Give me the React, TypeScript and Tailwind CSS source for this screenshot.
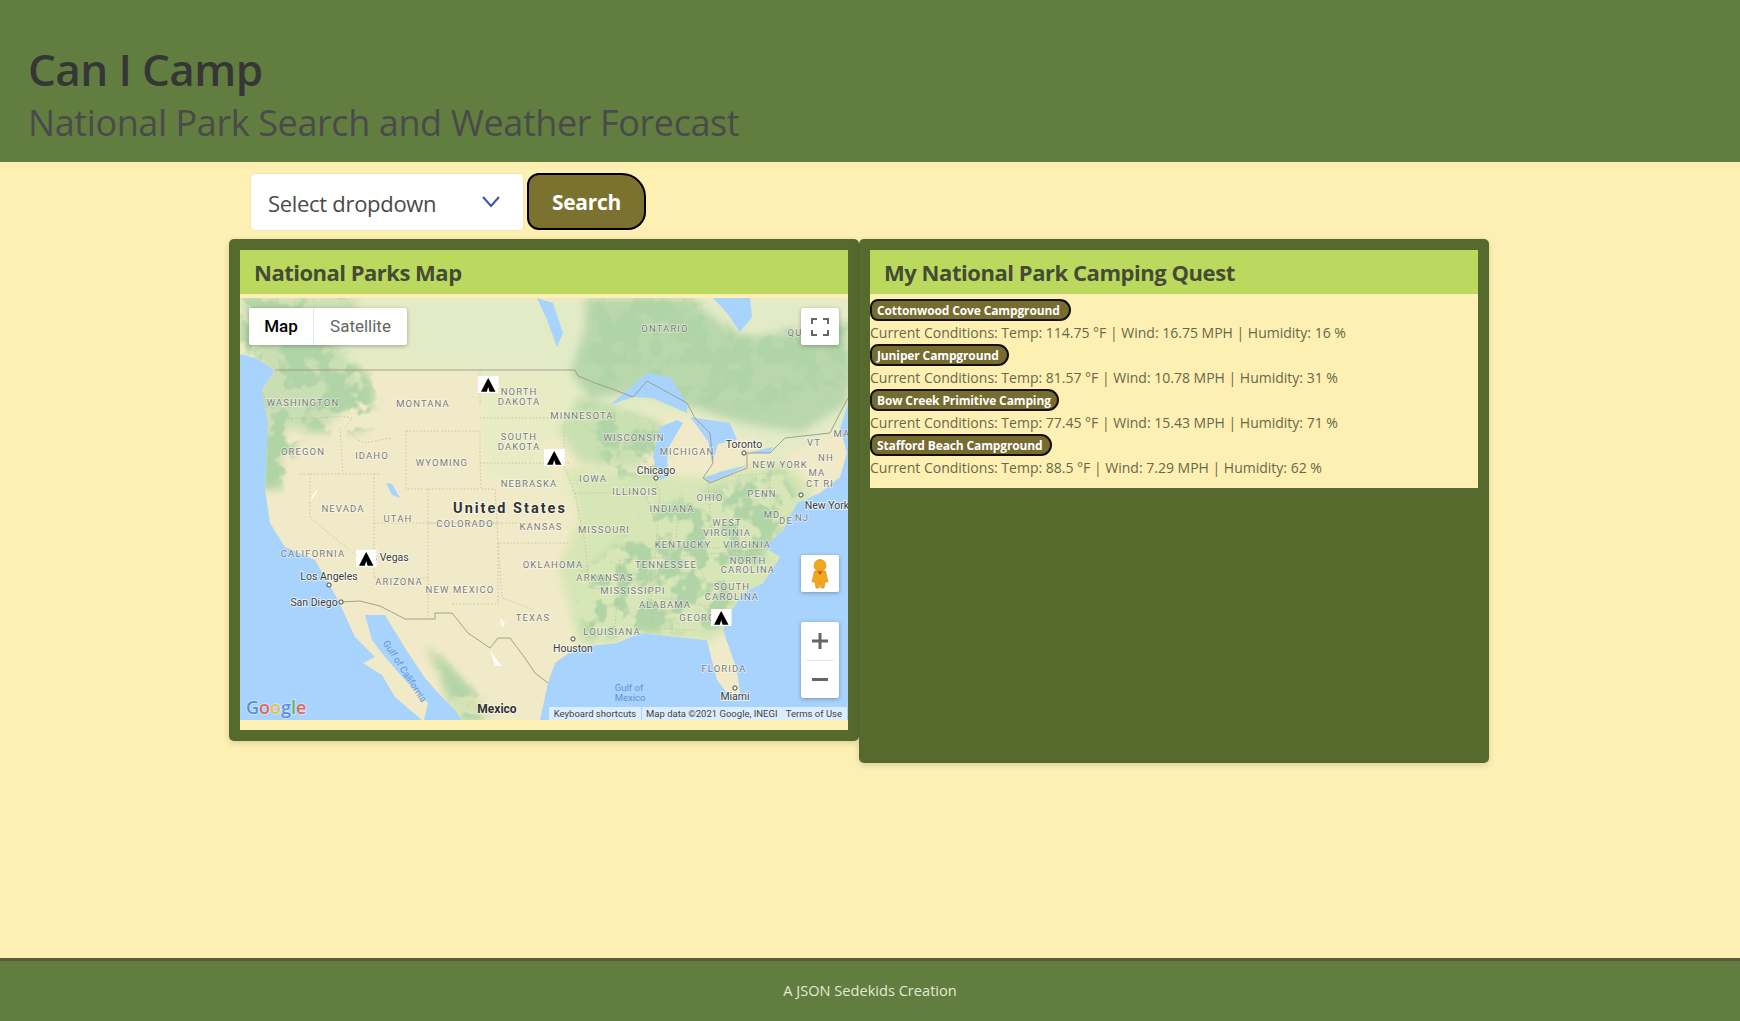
import React from "react";

type L = [string, number, number];
const states: L[] = [
  ["WASHINGTON", 63, 104], ["MONTANA", 183, 105], ["NORTH", 279, 93], ["DAKOTA", 279, 103], ["OREGON", 63, 153], ["IDAHO", 132, 157],
  ["WYOMING", 202, 164], ["SOUTH", 279, 138], ["DAKOTA", 279, 148], ["NEBRASKA", 289, 185], ["NEVADA", 103, 210], ["UTAH", 158, 220],
  ["COLORADO", 225, 225], ["KANSAS", 301, 228], ["MINNESOTA", 342, 117], ["WISCONSIN", 394, 139], ["MICHIGAN", 447, 153], ["IOWA", 353, 180],
  ["ILLINOIS", 395, 193], ["INDIANA", 432, 210], ["OHIO", 470, 199], ["PENN", 522, 195], ["NEW YORK", 540, 166], ["ONTARIO", 425, 30],
  ["QU", 555, 34], ["VT", 574, 144], ["NH", 586, 159], ["MA", 577, 174], ["CT RI", 580, 185], ["MD", 532, 216], ["DE", 546, 222], ["NJ", 562, 219],
  ["MA", 602, 135], ["WEST", 487, 224], ["VIRGINIA", 487, 234], ["KENTUCKY", 443, 246], ["VIRGINIA", 507, 246], ["MISSOURI", 364, 231],
  ["CALIFORNIA", 73, 255], ["ARIZONA", 159, 283], ["NEW MEXICO", 220, 291], ["TEXAS", 293, 319], ["OKLAHOMA", 313, 266], ["ARKANSAS", 365, 279],
  ["TENNESSEE", 426, 266], ["MISSISSIPPI", 393, 292], ["ALABAMA", 425, 306], ["NORTH", 508, 262], ["CAROLINA", 508, 271], ["SOUTH", 492, 288],
  ["CAROLINA", 492, 298], ["GEORGIA", 463, 319], ["LOUISIANA", 372, 333], ["FLORIDA", 484, 370],
];
const cities: L[] = [
  ["Toronto", 504, 146], ["Chicago", 416, 172], ["New York", 587, 207], ["Las Vegas", 144.5, 259], ["Los Angeles", 89, 278], ["San Diego", 74, 304],
  ["Houston", 333, 350], ["Miami", 495, 398],
];
const dots: [number, number][] = [[504, 155], [416, 180], [561, 197], [89, 287], [101, 304], [333, 341], [495, 390]];
const tents: [number, number][] = [[238, 78], [304, 151], [116, 252], [471, 311]];

const stateLines = [
  "M48 120 L70 121 L100 118 L112 120 L105 130 L118 142 L125 145 L150 140", "M100 130 L103 176 L141 176", "M166 133 L166 191 L255 191",
  "M166 133 L240 133 L240 165 L241 191", "M240 107 L240 72", "M240 120 L335 120", "M240 165 L330 165", "M60 176 L100 176 M70 176 L70 220 L122 262",
  "M134 176 L134 280 M134 225 L258 225 M188 191 L188 320 M134 280 L188 280", "M188 225 L290 225", "M255 191 L258 245 L330 245", "M258 245 L258 306 L212 306",
  "M258 245 L262 300 L295 312", "M325 120 L323 165 L335 195 L405 195 L415 225", "M335 195 L345 245 L350 290 L372 292", "M405 160 L420 195 L415 260 L380 262",
  "M380 262 L375 330 M410 262 L412 330 L455 332", "M440 200 L435 250 L480 250", "M468 178 L470 215 M470 180 L530 175 L530 205", "M415 260 L520 252",
  "M480 310 L420 300", "M455 262 L470 290",
];

const landPath =
  "M0 0 L608 0 L608 105 L600 130 L607 155 L600 179 L580 195 L557 205 L543 232 L524 249 L540 259 L523 285 L503 295 L487 319 L483 332 L497 372 L500 395 L490 399 L477 382 L470 355 L467 342 L437 339 L400 335 L377 345 L337 349 L315 365 L308 385 L300 422 L222 422 L182 422 L155 399 L142 377 L123 365 L135 359 L115 339 L98 302 L75 262 L45 249 L30 225 L25 192 L28 125 L22 92 L35 72 L15 60 L0 56 Z";

function Tent({ x, y }: { x: number; y: number }) {
  return (
    <g transform={`translate(${x} ${y})`}>
      <rect width="20.5" height="17" fill="#fff" />
      <path d="M10.2 2 L12 5.2 L17.5 15.8 L11.6 15.8 L10.2 11 L8.8 15.8 L3 15.8 L8.4 5.2 Z" fill="#000" />
    </g>
  );
}

function MapArt() {
  return (
    <svg viewBox="0 0 608 422" className="block w-full h-full" style={{ fontFamily: "Roboto, sans-serif" }}>
      <defs>
        <filter id="b3" x="-10%" y="-10%" width="120%" height="120%"><feGaussianBlur stdDeviation="4" /></filter>
        <filter id="b1"><feGaussianBlur stdDeviation="0.5" /></filter>
        <filter id="forest" x="0" y="0" width="100%" height="100%" colorInterpolationFilters="sRGB">
          <feGaussianBlur in="SourceGraphic" stdDeviation="5" result="soft" />
          <feTurbulence type="fractalNoise" baseFrequency="0.045" numOctaves="3" seed="7" result="t" />
          <feColorMatrix in="t" type="matrix" values="0 0 0 0 0.69  0 0 0 0 0.83  0 0 0 0 0.65  0 0 0 9 -4.1" result="n" />
          <feComposite in="n" in2="soft" operator="in" />
          <feGaussianBlur stdDeviation="0.6" />
        </filter>
        <clipPath id="land"><path d={landPath} /></clipPath>
      </defs>
      <rect width="608" height="422" fill="#a8d3fc" />
      <path d={landPath} fill="#f1eac8" />
      <g clipPath="url(#land)">
        <g filter="url(#b3)">
          <path d="M0 0 L608 0 L608 130 L540 160 L460 120 L330 110 L300 72 L120 72 L0 60 Z" fill="#e3ebc6" />
          <path d="M345 0 L450 0 L500 40 L608 25 L608 105 L560 135 L500 125 L455 110 L400 95 L350 100 L330 75 L345 30 Z" fill="#b8d7ab" />
          <path d="M300 105 L350 100 L420 125 L400 170 L340 165 Z" fill="#c9e0b0" />
          <path d="M325 170 L470 180 L540 160 L575 190 L530 285 L490 330 L470 345 L400 340 L340 350 L318 270 L340 220 Z" fill="#d7e6b6" />
          <path d="M0 0 L120 0 L100 50 L125 90 L80 135 L45 130 L40 190 L20 190 L20 60 Z" fill="#c9deb2" />
          <path d="M185 345 L215 370 L255 422 L215 422 Z" fill="#d5e2b4" />
          <path d="M240 72 L330 75 L335 105 L300 160 L330 200 L245 180 Z" fill="#e8ecc5" />
        </g>
        <g filter="url(#forest)" fill="#000">
          <path d="M0 0 H115 L100 50 L135 85 L135 130 L100 135 L60 130 L42 190 L20 190 L20 60 L0 50 Z M340 105 L425 130 L425 175 L370 180 Z M420 210 L540 170 L560 205 L500 290 L480 330 L400 335 L345 340 L340 280 Z M450 0 L500 40 L608 25 L608 90 L520 110 L455 105 L400 80 L350 90 L345 40 L360 0 Z M190 350 L240 400 L250 422 L220 422 Z" />
        </g>
      </g>
      <g fill="#a8d3fc" filter="url(#b1)">
        <path d="M370 107 L407 75 L430 79 L447 105 L447 115 L413 100 L393 99 Z" />
        <path d="M437 122 L420 129 L413 159 L420 182 L428 179 L427 152 L443 125 Z" />
        <path d="M450 119 L490 125 L497 142 L478 146 L472 165 L468 143 Z" />
        <path d="M463 180 L480 174 L507 167 L493 175 L470 185 Z" />
        <path d="M507 155 L533 149 L530 155 Z" />
        <path d="M297 0 L313 5 L323 35 L317 49 L307 22 Z" />
        <path d="M473 0 L510 0 L512 19 L500 34 L487 15 Z" />
        <path d="M125 317 L145 317 L165 350 L185 380 L200 397 L215 412 L222 422 L184 422 L188 405 L165 382 L145 359 L132 342 Z" />
        <path d="M146 185 L152 186 L160 200 L152 197 Z" />
      </g>
      <g fill="#fff" opacity="0.85">
        <path d="M72 198 L78 190 L76 196 L70 204 Z" />
        <path d="M260 320 L265 325 L262 330 Z" />
        <path d="M250 352 L257 362 L262 368 L255 368 Z" />
      </g>
      <g fill="none" stroke="#c4bb98" strokeWidth="0.8" strokeDasharray="1.5 2">
        {stateLines.map((d, i) => <path key={i} d={d} />)}
      </g>
      <g fill="none" stroke="#9a9a84" strokeWidth="0.9">
        <path d="M35 72 L335 72 L338 78 L355 85 L375 92 L393 99 L407 83 L447 105 L455 120 L470 135 L473 165 L463 180 L470 185 L507 170 L507 155 L530 155 L545 140 L590 135 L600 115 L608 100" />
        <path d="M101 304 L120 303 L140 308 L165 321 L195 321 L195 315 L212 315 L228 335 L250 350 L258 340 L270 340 L285 360 L295 375 L308 385" />
      </g>
      <g fontSize="9.5" fill="#7b7b78" textAnchor="middle" letterSpacing="1.1" stroke="#ffffff" strokeOpacity="0.55" strokeWidth="1.6" style={{ paintOrder: "stroke" }}>
        {states.map(([t, x, y], i) => <text key={i} x={x} y={y + 3.5}>{t}</text>)}
      </g>
      <g fontSize="10.5" fill="#3d3d3d" textAnchor="middle" stroke="#ffffff" strokeOpacity="0.7" strokeWidth="1.8" style={{ paintOrder: "stroke" }}>
        {cities.map(([t, x, y], i) => <text key={i} x={x} y={y + 3.5}>{t}</text>)}
      </g>
      <g fill="#fff" stroke="#444" strokeWidth="1">
        {dots.map(([x, y], i) => <circle key={i} cx={x} cy={y} r="2.1" />)}
      </g>
      <text x="270" y="215" textAnchor="middle" fontSize="14.5" fontWeight="700" letterSpacing="2" fill="#333" stroke="#fff" strokeOpacity="0.6" strokeWidth="2" style={{ paintOrder: "stroke" }}>United States</text>
      <text x="257" y="415" textAnchor="middle" fontSize="12" fontWeight="700" fill="#333" stroke="#fff" strokeOpacity="0.5" strokeWidth="1.6" style={{ paintOrder: "stroke" }}>Mexico</text>
      <g fontSize="9.5" fill="#5f93d3" textAnchor="middle">
        <text x="389" y="393">Gulf of</text>
        <text x="390" y="403">Mexico</text>
        <text transform="translate(162 375) rotate(57)" x="0" y="0">Gulf of California</text>
      </g>
      {tents.map(([x, y], i) => <Tent key={i} x={x} y={y} />)}
      <text x="6" y="416" fontSize="18" fontWeight="600" stroke="#fff" strokeOpacity="0.5" strokeWidth="1.5" style={{ paintOrder: "stroke", fontFamily: "'Open Sans', sans-serif" }}>
        <tspan fill="#5a8ddf">G</tspan><tspan fill="#e0665c">o</tspan><tspan fill="#e8bd4c">o</tspan><tspan fill="#5a8ddf">g</tspan><tspan fill="#5fb070">l</tspan><tspan fill="#e0665c">e</tspan>
      </text>
    </svg>
  );
}

function Ctrl({ className, children }: { className: string; children?: React.ReactNode }) {
  return <div className={`absolute bg-white rounded-[2px] shadow-[0_1px_4px_rgba(0,0,0,0.3)] ${className}`}>{children}</div>;
}

const quest = [
  { name: "Cottonwood Cove Campground", w: "w-[201px]", c: "Current Conditions: Temp: 114.75 °F | Wind: 16.75 MPH | Humidity: 16 %" },
  { name: "Juniper Campground", w: "w-[139px]", c: "Current Conditions: Temp: 81.57 °F | Wind: 10.78 MPH | Humidity: 31 %" },
  { name: "Bow Creek Primitive Camping", w: "w-[189px]", c: "Current Conditions: Temp: 77.45 °F | Wind: 15.43 MPH | Humidity: 71 %" },
  { name: "Stafford Beach Campground", w: "w-[182px]", c: "Current Conditions: Temp: 88.5 °F | Wind: 7.29 MPH | Humidity: 62 %" },
];

export default function App() {
  return (
    <div className="min-h-screen flex flex-col bg-[#fef0b3] font-['Open_Sans','Noto_Sans',sans-serif]">
      <header className="h-[162px] bg-[#627d40] pl-[28px] pt-[40px] flex flex-col">
        <h1 className="text-[44px] leading-[58px] font-semibold text-[#363636] tracking-[-0.6px]">Can I Camp</h1>
        <h2 className="pt-px text-[36px] leading-[47px] text-[#4a4a4a] tracking-[-0.4px]">National Park Search and Weather Forecast</h2>
      </header>

      <main className="flex-1 pl-[229px]">
        <div className="flex items-center pl-[22px] pt-[11px] h-[77px] pb-[9px]">
          <div className="w-[272px] h-[56px] bg-white rounded-[4px] shadow-[0_0_2px_rgba(0,0,0,0.12)] flex items-center justify-between pl-[17px] pr-[22px]">
            <span className="pt-[3px] text-[22px] text-[#4a4a4a] tracking-[-0.3px]">Select dropdown</span>
            <svg width="20" height="13" viewBox="0 0 20 13" fill="none" stroke="#3f51b5" strokeWidth="2"><path d="M2 2 L10 11 L18 2" /></svg>
          </div>
          <button className="ml-[4px] w-[119px] h-[57px] pt-[3px] bg-[#7c7230] border-2 border-black rounded-tl-[12px] rounded-bl-[12px] rounded-tr-[24px] rounded-br-[18px] text-white font-bold text-[21px] tracking-[-0.3px]">Search</button>
        </div>

        <div className="flex items-start">
          <section className="w-[630px] h-[502px] bg-[#566a2e] rounded-[5px] p-[11px] shadow-[0_2px_6px_rgba(0,0,0,0.15)]">
            <div className="h-[480px] bg-[#fef0b3] flex flex-col">
              <div className="h-[44px] bg-[#bcd95f] pl-[14px] flex items-center text-[22px] font-bold text-[#454b34] tracking-[-0.5px]">National Parks Map</div>
              <div className="relative mt-[4px] w-[608px] h-[422px] overflow-hidden">
                <MapArt />
                <div className="absolute left-[9px] top-[10px] h-[37px] flex bg-white rounded-[2px] shadow-[0_1px_4px_rgba(0,0,0,0.3)] font-['Roboto',sans-serif] text-[17px]">
                  <div className="w-[65px] flex items-center justify-center font-medium text-black border-r border-[#e6e6e6]">Map</div>
                  <div className="w-[93px] flex items-center justify-center text-[#666]">Satellite</div>
                </div>
                <Ctrl className="left-[561px] top-[10px] w-[38px] h-[37px] flex items-center justify-center">
                  <svg width="18" height="18" viewBox="0 0 18 18" fill="none" stroke="#666" strokeWidth="2"><path d="M1 6 V1 H6 M12 1 H17 V6 M17 12 V17 H12 M6 17 H1 V12" /></svg>
                </Ctrl>
                <Ctrl className="left-[561px] top-[257px] w-[38px] h-[37px] flex items-center justify-center">
                  <svg width="18" height="30" viewBox="0 0 18 30">
                    <circle cx="9" cy="6.5" r="6" fill="#f2a81d" stroke="#c98a14" strokeWidth="0.6" />
                    <path d="M3.5 12 H14.5 L17 23 L14 23 L13 29 H10 L9 23 L8 29 H5 L4 23 L1 23 Z" fill="#f2a81d" stroke="#c98a14" strokeWidth="0.6" />
                    <path d="M6.5 12.5 L9 16 L11.5 12.5" fill="#d8442f" />
                  </svg>
                </Ctrl>
                <Ctrl className="left-[561px] top-[324px] w-[38px] h-[76px] flex flex-col items-center">
                  <div className="h-[38px] flex items-center justify-center">
                    <svg width="18" height="18" viewBox="0 0 18 18" fill="#666"><path d="M7.5 1 H10.5 V7.5 H17 V10.5 H10.5 V17 H7.5 V10.5 H1 V7.5 H7.5 Z" /></svg>
                  </div>
                  <div className="w-[28px] h-px bg-[#e6e6e6]" />
                  <div className="h-[37px] flex items-center justify-center">
                    <svg width="18" height="4" viewBox="0 0 18 4" fill="#666"><rect x="1" width="16" height="3" /></svg>
                  </div>
                </Ctrl>
                <div className="absolute left-[309px] bottom-0 h-[13px] flex text-[#444] font-['Roboto',sans-serif] text-[9.5px] leading-[13px]">
                  <span className="w-[92px] bg-white/60 text-center">Keyboard shortcuts</span>
                  <span className="ml-px w-[205px] bg-white/60 flex justify-between pl-[4px] pr-[5px]">
                    <span>Map data ©2021 Google, INEGI</span><span>Terms of Use</span>
                  </span>
                </div>
              </div>
            </div>
          </section>

          <section className="w-[630px] h-[524px] bg-[#566a2e] rounded-[5px] p-[11px] shadow-[0_2px_6px_rgba(0,0,0,0.15)]">
            <div className="h-[238px] bg-[#fef0b3]">
              <div className="h-[44px] bg-[#bcd95f] pl-[14px] flex items-center text-[22px] font-bold text-[#454b34] tracking-[-0.45px]">My National Park Camping Quest</div>
              <ul className="pt-[5px]">
                {quest.map((q) => (
                  <li key={q.name} className="h-[45px]">
                    <div className={`${q.w} h-[22px] bg-[#766c30] border-2 border-[#111] rounded-l-[8px] rounded-r-[11px] pl-[5px] pt-px flex items-center text-white font-bold text-[12px] tracking-[-0.13px] whitespace-nowrap`}>{q.name}</div>
                    <p className="h-[23px] leading-[23px] text-[14px] text-[#66694a] whitespace-nowrap">{q.c}</p>
                  </li>
                ))}
              </ul>
            </div>
          </section>
        </div>
      </main>

      <footer className="h-[63px] bg-[#627d40] border-t-[3px] border-[#5b5a40] flex items-center justify-center text-[14.6px] text-[#e3ebd0]">A JSON Sedekids Creation</footer>
    </div>
  );
}
